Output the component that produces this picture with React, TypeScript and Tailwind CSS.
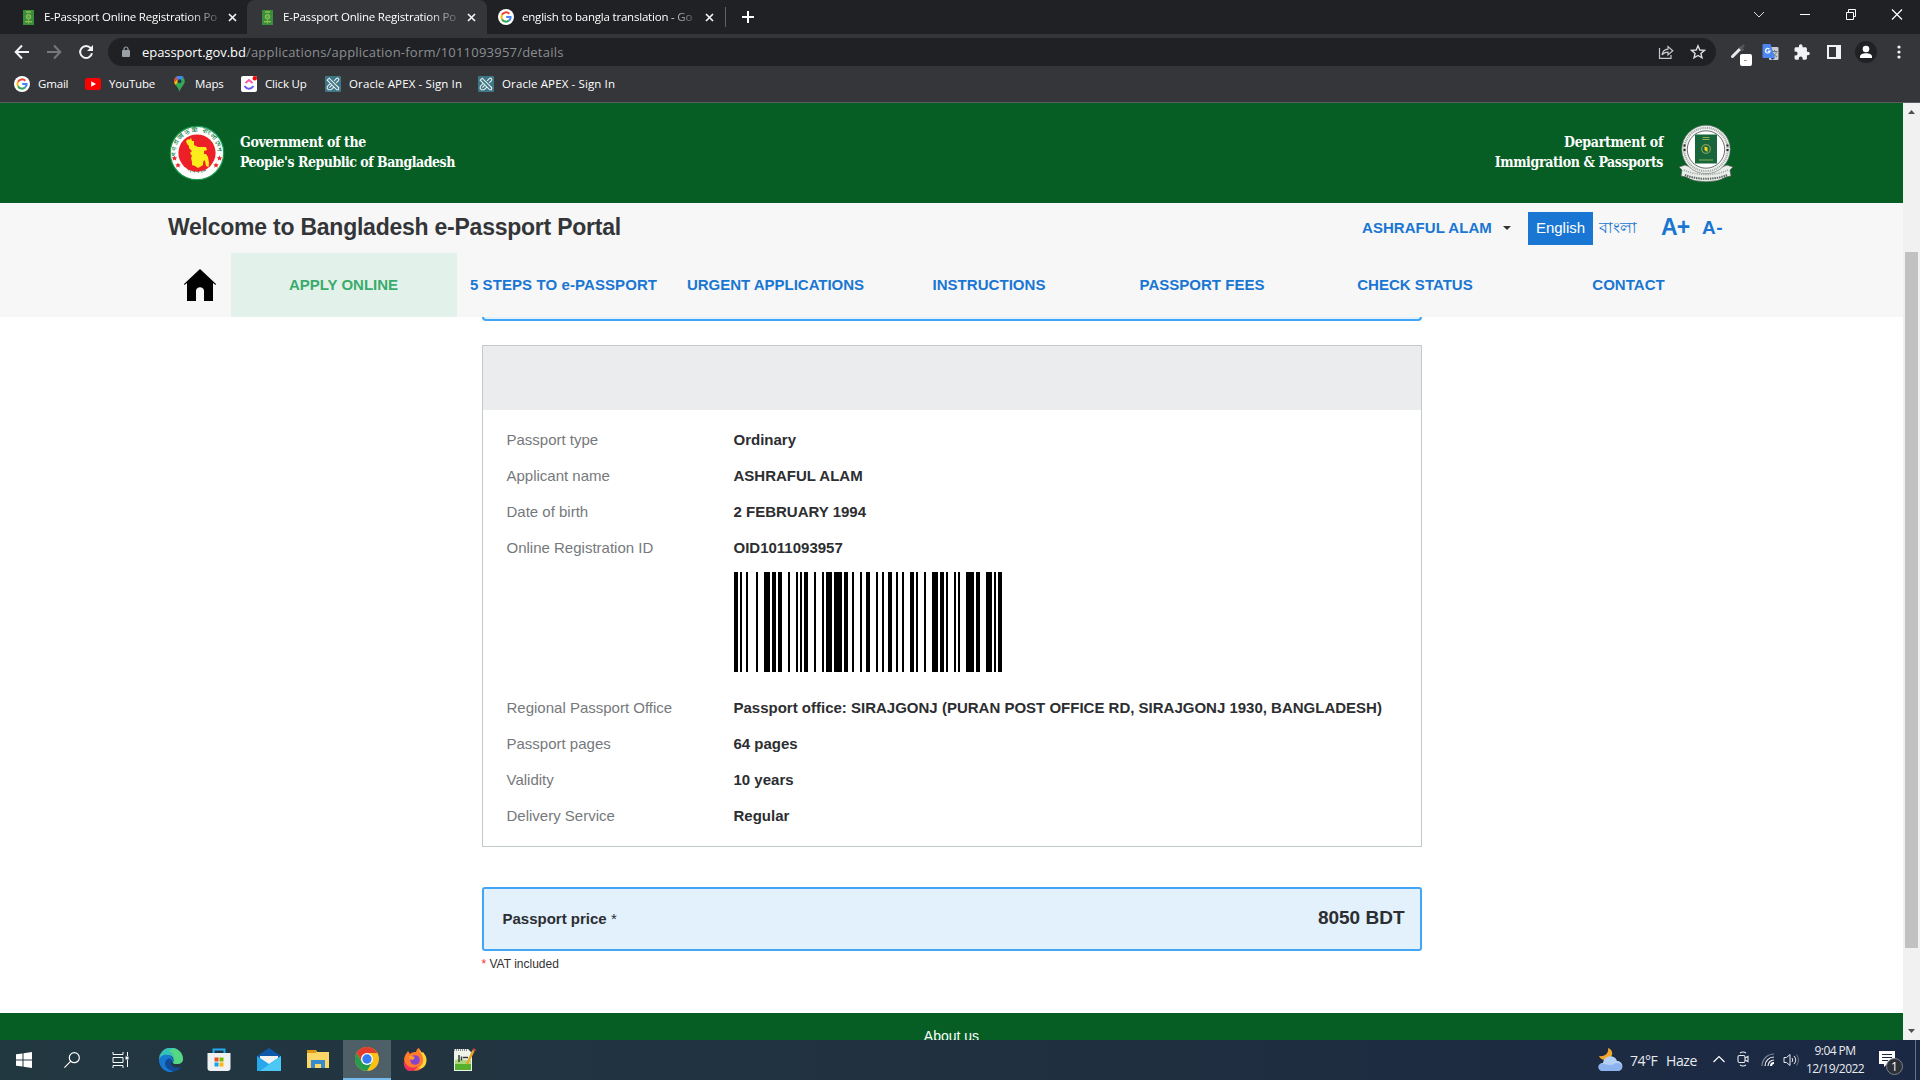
import React from "react";

const ui = "font-['Open_Sans','Noto_Sans',sans-serif]";

const GoogleG = ({ size = 16 }: { size?: number }) => (
  <svg width={size} height={size} viewBox="0 0 16 16" className="shrink-0">
    <circle cx="8" cy="8" r="8" fill="#fff" />
    <g fill="none" strokeWidth="2">
      <path d="M11.3 4.7A4.6 4.6 0 0 0 4 5.8" stroke="#ea4335" />
      <path d="M4 5.8a4.6 4.6 0 0 0 0 4.4" stroke="#fbbc05" />
      <path d="M4 10.2a4.6 4.6 0 0 0 7 1.4" stroke="#34a853" />
      <path d="M11 11.6A4.4 4.4 0 0 0 12.6 8H8.2" stroke="#4285f4" />
    </g>
  </svg>
);

const PassportFav = () => (
  <svg width="11" height="15" viewBox="0 0 11 15" className="shrink-0">
    <rect width="11" height="15" fill="#388e3c" />
    <rect x="3" y="1" width="5" height="2" fill="#7cb342" />
    <circle cx="5.5" cy="6.8" r="2.3" fill="#5fa843" stroke="#9bc25a" />
    <rect x="2" y="11" width="7" height="1.4" fill="#8dbb50" />
    <rect x="5" y="10" width="1" height="3.4" fill="#8dbb50" />
  </svg>
);

const Close = () => (
  <svg width="9" height="9" viewBox="0 0 9 9" className="shrink-0">
    <path d="M1 1l7 7M8 1L1 8" stroke="#f1f3f4" strokeWidth="1.7" />
  </svg>
);

const ApexIcon = () => (
  <svg width="16" height="16" viewBox="0 0 16 16" className="shrink-0">
    <rect width="16" height="16" rx="1" fill="#3f7686" />
    <g fill="none" stroke="#e4eef0" strokeWidth="1.1">
      <path d="M2.2 4.2l2-2 9.6 9.6-.4 1.9-1.7.1z" />
      <path d="M9.2 4.8l2.3-2.4c1.5-.8 3 .8 2 2.2l-2.3 2.3M6.8 9.2l-2.4 2.4M9 11L6 13.8H3.5L2.2 12.5 2.3 10.5 5 7.6" />
    </g>
  </svg>
);

function Tab({ title, width, google }: { title: string; width: string; google?: boolean }) {
  return (
    <>
      {google ? <GoogleG /> : <PassportFav />}
      <span className={`${width} whitespace-nowrap text-[11.5px] leading-4 tracking-[-0.2px] text-white [mask-image:linear-gradient(to_right,black_82%,transparent_103%)]`}>
        {title}
      </span>
    </>
  );
}

function TabStrip() {
  return (
    <div className="flex h-[34px] bg-[#202124]">
      <div className="flex w-[247px] shrink-0 items-center pl-[23px]">
        <Tab title="E-Passport Online Registration Po" width="w-[176px] ml-[10px]" />
        <span className="ml-[7.5px]"><Close /></span>
      </div>
      <div className="flex w-[240px] shrink-0 items-center rounded-t-lg bg-[#35363a] pl-[15px]">
        <Tab title="E-Passport Online Registration Po" width="w-[176px] ml-[10px]" />
        <span className="ml-[7.5px]"><Close /></span>
      </div>
      <div className="flex w-[239px] shrink-0 items-center pl-[11px]">
        <Tab title="english to bangla translation - Go" width="w-[176px] ml-2" google />
        <span className="ml-2"><Close /></span>
        <span className="ml-[11px] h-5 w-px bg-[#5f6368]" />
      </div>
      <div className="flex items-center pl-4">
        <svg width="12" height="12"><path d="M6 0v12M0 6h12" stroke="#fff" strokeWidth="2" /></svg>
      </div>
      <div className="ml-auto flex items-start pt-[9px] pr-[17px]">
        <svg width="12" height="12" className="mr-[34px]"><path d="M1 3l5 5 5-5" fill="none" stroke="#dadce0" /></svg>
        <svg width="12" height="12" className="mr-[34px]"><path d="M1 5.5h10" stroke="#fff" /></svg>
        <svg width="12" height="12" className="mr-[34px]"><path d="M1.5 3.5h7v7h-7zM3.5 3V.5h7v7H9" fill="none" stroke="#fff" /></svg>
        <svg width="12" height="12"><path d="M1 0.5l10 10M11 0.5l-10 10" stroke="#fff" strokeWidth="1.2" /></svg>
      </div>
    </div>
  );
}

function Toolbar() {
  return (
    <div className="flex h-9 items-center pl-[14px]">
      <svg width="16" height="16" className="mr-4"><path d="M15 8H2M8 1.5L1.7 8 8 14.5" fill="none" stroke="#f1f3f4" strokeWidth="2" /></svg>
      <svg width="16" height="16" className="mr-4"><path d="M1 8h13M8 1.5L14.3 8 8 14.5" fill="none" stroke="#77787b" strokeWidth="2" /></svg>
      <svg width="16" height="16" className="mr-[14px]">
        <path d="M12.8 4.2A6 6 0 1 0 14 9.3" fill="none" stroke="#f1f3f4" strokeWidth="2" />
        <path d="M15 1v6H9z" fill="#f1f3f4" />
      </svg>
      <div className="flex h-7 w-[1608px] items-center rounded-full bg-[#202124] pl-[14px]">
        <svg width="8" height="12" className="mr-3"><rect y="4" width="8" height="7" rx="1" fill="#9aa0a6" /><path d="M2 5V3a2 2 0 0 1 4 0v2" fill="none" stroke="#9aa0a6" strokeWidth="1.2" /></svg>
        <span className="text-[13px] leading-4 tracking-[0.22px] whitespace-nowrap text-[#8b8e93]"><span className="tracking-[-0.05px] text-white">epassport.gov.bd</span>/applications/application-form/1011093957/details</span>
        <svg width="16" height="16" className="mr-4 ml-auto" viewBox="0 0 16 16" fill="none" stroke="#c4c7cb" strokeWidth="1.2">
          <path d="M1.500 4v10.400h11.500V11" /><path d="M4 11c.6-3.600 2.600-5.500 6-5.800V2.500l4.800 4.200L10 11V8.200C7.400 8.200 5.500 9 4 11z" />
        </svg>
        <svg width="16" height="16" className="mr-[10px]" viewBox="0 0 16 16" fill="none" stroke="#dadce0" strokeWidth="1.4">
          <path d="M8 1.800l1.800 4.200 4.600.4-3.500 3 1.100 4.500L8 11.500l-4 2.400 1.100-4.500-3.500-3L6.200 6z" />
        </svg>
      </div>
      <svg width="24" height="24" viewBox="0 0 24 24" className="ml-[13px] overflow-visible">
        <path d="M3.500 16.500L11 9" stroke="#e8eaed" strokeWidth="3" strokeLinecap="round" /><path d="M10.500 7l4 3.500M12 8.500l3-3.500" stroke="#55565a" strokeWidth="2.5" />
        <rect x="11" y="14" width="12" height="12" rx="2" fill="#fff" /><path d="M15 20.500h1" stroke="#e27a20" /><path d="M16.500 20.500h1" stroke="#123a9c" />
      </svg>
      <svg width="17" height="17" viewBox="0 0 17 17" className="ml-[9px]">
        <rect x="7" y="3" width="9.5" height="13" rx="1" fill="#c9ccce" /><path d="M9.500 7.500h6M12.500 6v1.500M14.500 7.500c-.5 2.500-2 4-4 5M11 9c1 2 2 3 4 3.500" fill="none" stroke="#68797f" />
        <path d="M1 0h7.500L13 14H1.500a1 1 0 0 1-1-1V1z" fill="#4b87ef" /><path d="M9 14h4l-3 2z" fill="#263ea5" />
        <path d="M7.500 5.200A2.300 2.300 0 1 0 8 7.200H5.800" fill="none" stroke="#fff" strokeWidth="1.2" />
      </svg>
      <svg width="16" height="16" viewBox="1.5 0.5 21.5 22" className="ml-[15px]"><path fill="#f1f3f4" d="M20.500 11H19V7c0-1.100-.9-2-2-2h-4V3.500a2.500 2.500 0 0 0-5 0V5H4c-1.100 0-2 .9-2 2v3.800h1.500a2.700 2.700 0 0 1 0 5.400H2V20c0 1.100.9 2 2 2h3.800v-1.500a2.700 2.700 0 0 1 5.400 0V22H17c1.100 0 2-.9 2-2v-4h1.500a2.500 2.500 0 0 0 0-5z" /></svg>
      <svg width="14" height="14" className="ml-[17px]"><path d="M1 1h12v12H1z" fill="none" stroke="#f1f3f4" strokeWidth="2" /><path d="M9 1h4v12H9z" fill="#f1f3f4" /></svg>
      <svg width="22" height="22" className="ml-[14px]"><circle cx="11" cy="11" r="11" fill="#202124" /><circle cx="11" cy="8" r="3.3" fill="#fff" /><path d="M5 17v-1.500c0-4.500 12-4.500 12 0V17z" fill="#fff" /></svg>
      <svg width="4" height="14" className="ml-5"><g fill="#f1f3f4"><circle cx="2" cy="2" r="1.6" /><circle cx="2" cy="7" r="1.6" /><circle cx="2" cy="12" r="1.6" /></g></svg>
    </div>
  );
}

function Bookmarks() {
  const label = "ml-2 whitespace-nowrap text-[11.5px] leading-4 tracking-[-0.17px] text-white";
  const wideLabel = "ml-2 whitespace-nowrap text-[11.5px] leading-4 tracking-[0.12px] text-white";
  return (
    <div className="flex h-8 items-center pb-[4px] pl-[14px]">
      <div className="flex w-[71px] items-center"><GoogleG /><span className={label}>Gmail</span></div>
      <div className="flex w-[87px] items-center">
        <svg width="16" height="12" className="shrink-0"><rect width="16" height="12" rx="2.5" fill="#f00" /><path d="M6.200 3.200v5.600L11 6z" fill="#fff" /></svg>
        <span className={label}>YouTube</span>
      </div>
      <div className="flex w-[69px] items-center">
        <svg width="15" height="16" viewBox="0 0 15 16" className="shrink-0">
          <path d="M7.500 0A5.300 5.300 0 0 0 2.200 5.300c0 3.700 4 5.200 5.300 10.700 1.300-5.500 5.300-7 5.300-10.700A5.300 5.300 0 0 0 7.500 0z" fill="#34a853" />
          <path d="M3.400 9L9.500 1.800 5.900.2C3.400 1 2.200 3 2.200 5.300c0 1.500.5 2.600 1.200 3.700z" fill="#fbbc04" />
          <path d="M3.400 2l4.100 3.500L11.600.8C8.800-.9 5.200-.4 3.400 2z" fill="#4285f4" /><path d="M3.400 2C2.300 3.400 2 5 2.400 6.500l4-4z" fill="#ea4335" /><circle cx="7.5" cy="5.3" r="2" fill="#253850" />
        </svg>
        <span className={label}>Maps</span>
      </div>
      <div className="flex w-[84px] items-center">
        <svg width="16" height="16" className="shrink-0"><rect width="16" height="16" rx="2" fill="#fff" /><path d="M4.500 7L8 4l3.500 3" fill="none" stroke="#f65aa5" strokeWidth="2" /><path d="M3.500 10c2.500 3.600 6.500 3.600 9 0" fill="none" stroke="#6558f5" strokeWidth="2" /><circle cx="13.8" cy="2.2" r="2.2" fill="#f00" /></svg>
        <span className={label}>Click Up</span>
      </div>
      <div className="flex w-[153px] items-center"><ApexIcon /><span className={wideLabel}>Oracle APEX - Sign In</span></div>
      <div className="flex items-center"><ApexIcon /><span className={wideLabel}>Oracle APEX - Sign In</span></div>
    </div>
  );
}

const GovSeal = () => (
  <svg width="56" height="56" viewBox="0 0 56 56" className="shrink-0">
    <circle cx="28" cy="28" r="26.7" fill="#fff" stroke="#1c9a50" strokeWidth="1.2" />
    <path id="sealTop" d="M7.500 31a20.800 20.800 0 1 1 41 0" fill="none" />
    <path id="sealBottom" d="M9 36.500a21.500 21.500 0 0 0 38 0" fill="none" />
    <text fontSize="6" fontWeight="bold" fill="#16834a" fontFamily="sans-serif"><textPath href="#sealTop" textLength="68">গণপ্রজাতন্ত্রী বাংলাদেশ</textPath></text>
    <text fontSize="6.5" fontWeight="bold" fill="#16834a" fontFamily="sans-serif" textAnchor="middle"><textPath href="#sealBottom" startOffset="50%">সরকার</textPath></text>
    <circle cx="28" cy="28" r="18.6" fill="#ed2027" />
    <path d="M17 16l2-2 1 1 2-2 1 3 2 0 0 4 4 2 8 0 1 3-3 1 0 3 2 0 2 3 1 6-.5 4-2.500-1-1-5-1-1-1 3 0 2-3 2-2 1-3-2-3-1 0-3-1-4 1-2-2-3 2-2-3-3 0-2-2-2z" fill="#fdec1c" />
    <g fill="#ed2027"><path id="seal-star" d="M5.500 30.500l.8 1.800 2 .1-1.500 1.300.5 2-1.800-1.100-1.800 1.100.5-2-1.500-1.300 2-.1z" /><use href="#seal-star" x="3.5" y="7" /><use href="#seal-star" x="45" /><use href="#seal-star" x="41.5" y="7" /></g>
  </svg>
);

const DeptSeal = () => (
  <svg width="56" height="58" viewBox="0 0 56 58" className="shrink-0">
    <path d="M1 43l6-2 21 8 21-8 6 2-3 3 1 6-5 1c-3 1.500-6 3-9 3.700q-11 2.300-22 0c-3-.7-6-2.200-9-3.700l-5-1 1-6z" fill="#e9ece9" stroke="#4f5b53" strokeWidth=".7" />
    <circle cx="28" cy="25.500" r="24.2" fill="#f3f4f2" stroke="#6a756e" strokeWidth=".7" />
    <circle cx="28" cy="25.500" r="21.700" fill="none" stroke="#a3aba6" strokeWidth="2.200" strokeDasharray="1.100 .8" />
    <circle cx="28" cy="25.500" r="18.700" fill="#fff" stroke="#454f48" strokeWidth=".8" />
    <rect x="17" y="10.500" width="22" height="29" fill="#17653a" />
    <path d="M24.500 13.500h7M24.500 15.500h7M21 36h14" stroke="#8fae50" />
    <circle cx="28" cy="25" r="4.300" fill="none" stroke="#7f9e5b" strokeWidth="1.200" /><path d="M26.500 22.500l3 1v4.500l-3-2z" fill="#fdd51c" />
    <path d="M6.500 20.500v6.500M49.500 20.500v6.500" stroke="#222" strokeWidth="2" strokeDasharray="2 2.500" />
    <path d="M6 46c12 6 32 6 44 0" fill="none" stroke="#a0a8a3" strokeWidth="1.500" strokeDasharray="1.200 1" />
    <path d="M7 51c12 5 30 5 42 0" fill="none" stroke="#59655d" strokeWidth="2" strokeDasharray="1.400 .9" />
  </svg>
);

const nav = [
  { label: "5 STEPS TO e-PASSPORT", cls: "w-[213px] tracking-[0.09px]" },
  { label: "URGENT APPLICATIONS", cls: "w-[211px] tracking-[-0.02px]" },
  { label: "INSTRUCTIONS", cls: "w-[216px] tracking-[0.04px]" },
  { label: "PASSPORT FEES", cls: "w-[210px] tracking-[0.02px]" },
  { label: "CHECK STATUS", cls: "w-[216px] tracking-[0.02px]" },
  { label: "CONTACT", cls: "w-[211px] tracking-[0.03px]" },
];

function SiteHeader() {
  const serif = "font-['DejaVu_Serif_Condensed','DejaVu_Serif',serif] text-[14px] font-bold leading-5 text-white whitespace-nowrap pb-0.5";
  return (
    <header className="shrink-0">
      <div className="flex h-[100px] items-center bg-[#065e25] pr-[169px] pl-[169px]">
        <GovSeal />
        <p className={`${serif} ml-[15px]`}>
          <span className="block tracking-[-0.37px]">Government of the</span>
          <span className="block tracking-[-0.5px]">People's Republic of Bangladesh</span>
        </p>
        <p className={`${serif} mr-[15px] ml-auto text-right`}>
          <span className="block tracking-[-0.3px]">Department of</span>
          <span className="block tracking-[-0.4px]">Immigration &amp; Passports</span>
        </p>
        <DeptSeal />
      </div>
      <div className="bg-[#f7f7f7]">
        <div className="flex h-[50px] items-center pl-[168px] text-[#1976d2]">
          <h1 className="w-[1194px] pb-0.5 text-[23px] leading-[48px] font-bold tracking-[-0.24px] text-[#333538]">Welcome to Bangladesh e-Passport Portal</h1>
          <span className="w-[130px] text-[15px] font-bold tracking-[0.05px] whitespace-nowrap">ASHRAFUL ALAM</span>
          <svg width="8" height="4" className="ml-[11px]"><path d="M0 0h8L4 4z" fill="#333" /></svg>
          <span className="ml-[17px] flex h-[33px] w-[65px] items-center justify-center bg-[#1976d2] pt-px text-[15px] tracking-[-0.02px] text-white">English</span>
          <span className="ml-1.5 w-[62px] text-[15.5px] leading-5">বাংলা</span>
          <span className="w-[41px] pb-0.5 text-[23px] font-bold tracking-[-0.9px]">A+</span>
          <span className="text-[19px] font-bold tracking-[0.6px]">A-</span>
        </div>
        <nav className="flex h-16 items-center pl-[184px] text-[15px] font-bold text-[#1976d2]">
          <svg width="32" height="32" className="mr-[15px] shrink-0"><path d="M16 0L0 15l.5 1L3 14v18h9V22c0-5 8-5 8 0v10h9V14l2.500 2 .5-1z" /></svg>
          <span className="flex h-16 w-[226px] shrink-0 items-center justify-center bg-[#e2f2ea] pr-px text-[#3aab6c]">APPLY ONLINE</span>
          {nav.map((n) => (
            <span key={n.label} className={`${n.cls} shrink-0 text-center whitespace-nowrap`}>{n.label}</span>
          ))}
        </nav>
      </div>
    </header>
  );
}

// Code 128 symbols as alternating bar and space widths; one module is 2px.
const symbols = [
  "211214", "133121", "231311", "112313", "113141", "221312",
  "231212", "221213", "211313", "312113", "111341", "2331112",
];

function Barcode() {
  return (
    <div className="mt-1.5 mb-[18px] flex h-[100px]">
      {symbols.join("").split("").map((m, i) => (
        <span key={i} className={i % 2 === 0 ? "bg-black" : "bg-white"} style={{ width: Number(m) * 2 }} />
      ))}
    </div>
  );
}

function Row({ label, value, children }: { label: string; value: string; children?: React.ReactNode }) {
  return (
    <div className="flex leading-9">
      <span className="w-[227px] shrink-0 text-[15px] text-[#76797c]">{label}</span>
      <div className="text-[15px] font-bold whitespace-nowrap text-[#2c2e31]">{value}{children}</div>
    </div>
  );
}

function Content() {
  return (
    <main className="flex flex-1 flex-col">
      <div className="mx-auto w-[940px]">
        <div className="mb-6 h-1 rounded-b-sm border-x-2 border-b-2 border-[#42a5f5] bg-[#e3f1fc]" />
        <section className="h-[502px] border border-[#c3cbca]">
          <div className="h-16 bg-[#eaecee]" />
          <div className="px-6 pt-3">
            <Row label="Passport type" value="Ordinary" />
            <Row label="Applicant name" value="ASHRAFUL ALAM" />
            <Row label="Date of birth" value="2 FEBRUARY 1994" />
            <Row label="Online Registration ID" value="OID1011093957"><Barcode /></Row>
            <Row label="Regional Passport Office" value="Passport office: SIRAJGONJ (PURAN POST OFFICE RD, SIRAJGONJ 1930, BANGLADESH)" />
            <Row label="Passport pages" value="64 pages" />
            <Row label="Validity" value="10 years" />
            <Row label="Delivery Service" value="Regular" />
          </div>
        </section>
        <section className="mt-10 flex h-16 items-center justify-between rounded-[3px] border-2 border-[#42a5f5] bg-[#e3f1fc] pr-[15px] pl-[19px] text-[#2c2e31]">
          <span className="text-[15px] font-bold">Passport price <span className="font-normal">*</span></span>
          <span className="mb-px text-[19px] font-bold">8050 BDT</span>
        </section>
        <p className="mt-1 text-[12px] leading-[18px] text-[#333]"><span className="text-red-500">*</span> VAT included</p>
      </div>
      <footer className="mt-auto h-[27px] overflow-hidden bg-[#065e25] pt-[13px] text-center text-[14px] leading-5 text-white">About us</footer>
    </main>
  );
}

function Scrollbar() {
  return (
    <div className="flex w-[17px] flex-col items-center bg-[#f1f1f1]">
      <svg width="17" height="17"><path d="M5 11h7L8.500 7z" fill="#505050" /></svg>
      <div className="mt-[132px] h-[696px] w-[13px] bg-[#c1c1c1]" />
      <svg width="17" height="17" className="mt-auto"><path d="M5 6h7l-3.500 4z" fill="#505050" /></svg>
    </div>
  );
}

const slot = "flex h-10 w-12 shrink-0 items-center justify-center";

function Taskbar() {
  return (
    <div className={`${ui} flex h-10 bg-linear-to-r from-[#223841] via-[#21303f] to-[#1b2844] text-[#e8ebef]`}>
      <div className={slot}><svg width="16" height="16"><path fill="#fff" d="M0 2.300L6.500 1.400V7.500H0zM7.500 1.200L16 0v7.500H7.500zM0 8.500h6.500v6.100L0 13.700zM7.500 8.500H16V16l-8.500-1.200z" /></svg></div>
      <div className={slot}><svg width="16" height="16" fill="none" stroke="#fff" strokeWidth="1.2"><circle cx="10.3" cy="5.7" r="5" /><path d="M6.800 9.200L.4 15.600" /></svg></div>
      <div className={slot}><svg width="17" height="16" fill="none" stroke="#fff"><path d="M1 0v2.500h10V0M1 16v-2.500h10V16M1 5.500h10v5H1zM15.500 0v4M15.500 8v7" /><path d="M13.500 6h3" strokeWidth="3" /></svg></div>
      <div className={`${slot} ml-[3px]`}>
        <svg width="24" height="24" viewBox="0 0 24 24">
          <path d="M0 12A12 12 0 0 1 24 11c0 4-4 5.500-7.500 5-3-.3-2.500-1.500-2-2.500C15.500 10 12 6 7 7.500 3 8.500 0 12 0 14z" fill="#35c1b6" /><path d="M14 0.300C20 1 24 5.500 24 11c0 4-4 5.500-7.500 5-3-.3-2.500-1.500-2-2.500C16 9 14 4 10 3z" fill="#62dd72" opacity=".75" />
          <path d="M0 12c1-5 9-7 12.500-3 2 2 2.500 4 1.500 5.500-2-2-5-.500-4.500 3C10 21 13 23.500 15 23.600 6 26 0 19 0 12z" fill="#1678cf" />
          <path d="M9.500 10.500c-5 2-5.500 10.500 5.500 13 3-.8 6-2.500 7.500-5-5 2.500-9 .5-10-1.500-.8-2-.2-3.500 1-4-1-2-2-2.800-4-2.500z" fill="#114b98" />
        </svg>
      </div>
      <div className={slot}>
        <svg width="24" height="24"><path d="M6.500 6V1.500h11V6" fill="none" stroke="#25abf4" strokeWidth="2" /><path d="M.5 5h23v15a3 3 0 0 1-3 3h-17a3 3 0 0 1-3-3z" fill="#f0f1f2" /><path d="M7.500 9.500h4v4h-4z" fill="#e94e24" /><path d="M12.500 9.500h4v4h-4z" fill="#7fba00" /><path d="M7.500 14.500h4v4h-4z" fill="#11a4ef" /><path d="M12.500 14.500h4v4h-4z" fill="#fdb813" /></svg>
      </div>
      <div className={`${slot} ml-0.5`}>
        <svg width="24" height="24"><path d="M0 8l12-8 12 8v6H0z" fill="#0e58a9" /><path d="M3 8h18v8H3z" fill="#f2f2f2" /><path d="M0 8l12 8 12-8v15H0z" fill="#28a8ea" /><path d="M24 8L3 23h21z" fill="#4cc8f7" /></svg>
      </div>
      <div className={`${slot} ml-px`}>
        <svg width="22" height="20"><path d="M0 0h9l1 2h12v16H0z" fill="#fcd667" /><path d="M0 0h9v3H0z" fill="#df9b12" /><path d="M4 18v-8h14v8h-4v-4H8v4z" fill="#368bce" /></svg>
      </div>
      <div className="ml-px flex h-10 w-12 shrink-0 items-center justify-center border-b-2 border-[#76b9ed] bg-[#4e5f67]">
        <svg width="24" height="24" viewBox="0 0 24 24"><circle cx="12" cy="12" r="12" fill="#fbc116" /><path d="M1.600 6A12 12 0 0 1 22.400 6H12l-5 9z" fill="#e33b2e" /><path d="M1.600 6A12 12 0 0 0 12 24l5.200-9H6.800z" fill="#269b4e" /><circle cx="12" cy="12" r="6" fill="#fff" /><circle cx="12" cy="12" r="4.7" fill="#347df0" /></svg>
      </div>
      <div className={slot}>
        <svg width="24" height="24" viewBox="0 0 24 24"><path d="M3 6l2-3 2 3c2-2 5-2 6-2 0-2 2-4 3-4 0 2 2 3 3 5l1-1c3 4 4 9 1 14-5 8-17 5-19-3C.5 12 1 9 3 6z" fill="#ff7a2b" /><path d="M16 0c0 3 1 4 3 7 3 6 0 11-4 13 5 2 9-3 8.500-9C23 7 20 5 20 4l-1 1c-1-2-3-3-3-5z" fill="#ffd43d" /><path d="M1 12c1 6 8 10 14 6-3 5-7 5-9 5-4-1-6-6-5-11z" fill="#ef3060" /><circle cx="12" cy="12" r="4.8" fill="#8444cf" /><path d="M6 8c3-1 4 1 6 1l-2 3-4-1z" fill="#ff9a2e" /></svg>
      </div>
      <div className={slot}>
        <svg width="23" height="24" className="ml-0.5"><path d="M1 1h14l4 4v18H1z" fill="#eff4eb" /><path d="M2 14h16v8H2z" fill="#56b02c" /><path d="M2 12c5-2 10 1 16 0v4H2z" fill="#a9d97c" /><path d="M1 2h14" stroke="#888" strokeWidth="2" strokeDasharray="1 1" /><path d="M6 7v7M8.500 8.500v4M10 9.500h5" stroke="#3b3b3b" strokeWidth="1.5" /><path d="M20.500 2.500L14 16" stroke="#e8a529" strokeWidth="2.5" /><path d="M20 1l2.500 1.500" stroke="#d54d3d" strokeWidth="2" /></svg>
      </div>
      <div className="ml-auto flex items-center">
        <svg width="25" height="24" viewBox="0 0 25 24"><path d="M10 0c1 5-3 9-9 8 2 5 10 6 13-1 1-3-1-6-4-7z" fill="#f4a62a" /><path d="M5 23c-6 0-6-8 0-8 1-8 12-9 14-2 7 0 7 10 1 10z" fill="#b5d0f7" /><path d="M5 23c-5 0-6-6-2-7 5-1 8 3 13 0 3-2 7-1 8 2 0 3-2 5-4 5z" fill="#8db3ee" /></svg>
        <span className="ml-[7px] w-9 text-[14px] tracking-[-0.5px] whitespace-nowrap">74°F</span>
        <span className="w-[47px] text-[14px] tracking-[-0.4px]">Haze</span>
        <svg width="12" height="8" className="mb-0.5"><path d="M.5 7L6 1.500 11.500 7" fill="none" stroke="#fff" strokeWidth="1.2" /></svg>
        <svg width="13" height="16" className="mb-0.5 ml-3" fill="none" stroke="#e8ebef" strokeWidth="1.1"><rect x="1" y="4.5" width="7" height="7" rx="1.5" /><path d="M8 7l3-1.500v5L8 9M3 2q3-2 6 0M3 14q3 2 6 0" /></svg>
        <svg width="14" height="14" className="ml-[11px]" fill="none" strokeWidth="1.2"><path d="M1 13A12 12 0 0 1 13 1" stroke="#7d8796" /><path d="M4 13A9 9 0 0 1 13 4M7 13a6 6 0 0 1 6-6" stroke="#e8ebef" /><path d="M10 13a3 3 0 0 1 3-3" stroke="#fff" strokeWidth="2" /></svg>
        <svg width="17" height="14" className="ml-2" fill="none" stroke="#e8ebef"><path d="M1 4.500h2.500L7 1.500v11L3.500 9.500H1zM9 5q1.500 2 0 4M11 3q3.500 4 0 8" /><path d="M13.500 1.500q4 5.500 0 11" stroke="#6f798b" /></svg>
        <div className="ml-[5px] w-[60px] text-center text-[12px] leading-[18px] tracking-[-0.55px] whitespace-nowrap">9:04 PM<br />12/19/2022</div>
        <svg width="26" height="26" className="mt-[5px] ml-[13px]"><path d="M1 1h16v13H9l-3 3v-3H1z" fill="#fff" /><path d="M4 4.500h10M4 7.500h10M4 10.500h6" stroke="#1b2844" /><circle cx="16.5" cy="16.5" r="8" fill="#2c3137" stroke="#7e838b" /><text x="16.5" y="21" fontSize="12" textAnchor="middle" fill="#fff">1</text></svg>
        <span className="mr-[4px] ml-[11px] h-10 w-px bg-[#66708a]" />
      </div>
    </div>
  );
}

export default function App() {
  return (
    <div className="flex h-[1080px] w-[1920px] flex-col overflow-hidden bg-white">
      <div className={`${ui} h-[103px] shrink-0 border-b border-[#5c5d60] bg-[#35363a]`}>
        <TabStrip />
        <Toolbar />
        <Bookmarks />
      </div>
      <div className="flex h-[937px] shrink-0">
        <div className="flex w-[1903px] flex-col font-['Liberation_Sans',Arial,sans-serif]">
          <SiteHeader />
          <Content />
        </div>
        <Scrollbar />
      </div>
      <Taskbar />
    </div>
  );
}
